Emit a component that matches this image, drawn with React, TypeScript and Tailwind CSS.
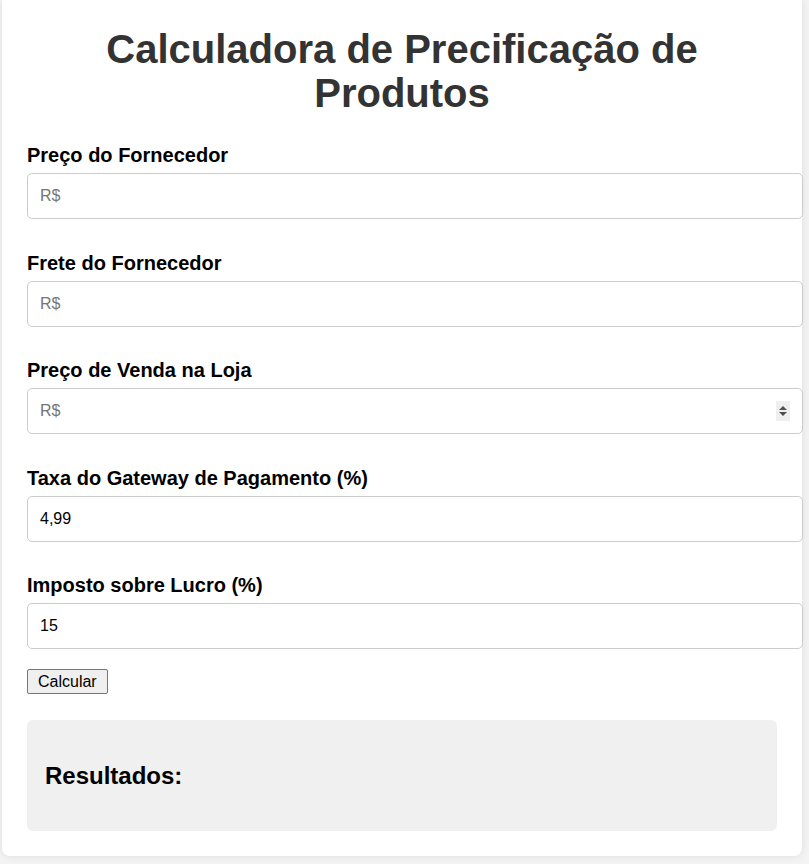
export default function App() {
  const fields = [
    { label: "Preço do Fornecedor", placeholder: "R$", value: "" },
    { label: "Frete do Fornecedor", placeholder: "R$", value: "" },
    { label: "Preço de Venda na Loja", placeholder: "R$", value: "", spinner: true },
    { label: "Taxa do Gateway de Pagamento (%)", placeholder: "", value: "4,99" },
    { label: "Imposto sobre Lucro (%)", placeholder: "", value: "15" },
  ];

  return (
    <div className="min-h-screen bg-[#f4f4f4] font-['Liberation_Sans',Arial,sans-serif] text-black">
      <div className="ml-[2px] w-[800px] rounded-b-[8px] bg-white px-[25px] pt-[27px] pb-[25px] shadow-[0_0_10px_rgba(0,0,0,0.1)]">
        <h1 className="mb-[29px] text-center text-[40px] leading-[44px] font-bold text-[#333]">
          Calculadora de Precificação de Produtos
        </h1>

        <div className="flex flex-col gap-[32.5px]">
          {fields.map((f) => (
            <div key={f.label}>
              <label className="mb-[6px] block text-[20px] leading-[23px] font-bold">{f.label}</label>
              <div className="relative">
                <input
                  type="text"
                  placeholder={f.placeholder}
                  defaultValue={f.value}
                  className="box-content block h-[44px] w-full rounded-[5px] border border-[#ccc] bg-white px-3 text-[16px] text-black outline-none placeholder:text-[#757575]"
                />
                {f.spinner && (
                  <div className="absolute top-[13px] left-[749px] h-[20px] w-[14px] bg-[#efefef]">
                    <svg width="14" height="20" viewBox="0 0 14 20">
                      <polygon points="3,9 7,5 11,9" fill="#505050" />
                      <polygon points="3,11 11,11 7,15" fill="#505050" />
                    </svg>
                  </div>
                )}
              </div>
            </div>
          ))}
        </div>

        <button className="mt-5 block h-[25px] rounded-[2px] border border-[#767676] bg-[#efefef] px-[10px] text-[16px] leading-[19px] text-black">
          Calcular
        </button>

        <div className="mt-[26px] h-[111px] rounded-[6px] bg-[#f0f0f0] px-[18px] py-5">
          <h2 className="my-[22px] text-[24px] leading-[27px] font-bold">Resultados:</h2>
        </div>
      </div>
    </div>
  );
}
